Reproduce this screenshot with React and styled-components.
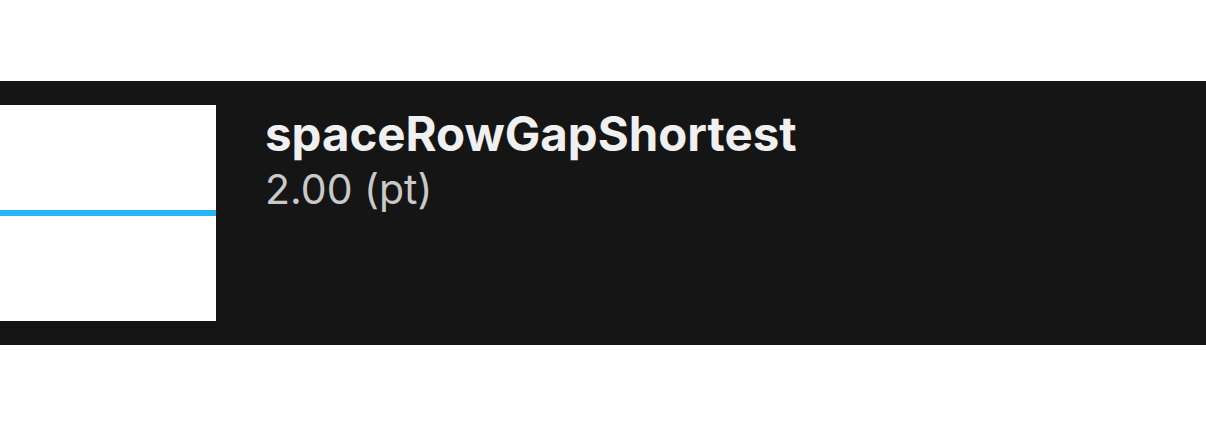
import React from "react";
import styled, { createGlobalStyle } from "styled-components";

const GlobalStyle = createGlobalStyle`
  html, body {
    margin: 0;
    padding: 0;
    background: #ffffff;
  }
  body {
    font-family: "Inter", "Roboto", sans-serif;
  }
`;

const Page = styled.div`
  width: 1206px;
  height: 426px;
  padding-top: 81px;
  box-sizing: border-box;
`;

const Band = styled.div`
  display: flex;
  align-items: flex-start;
  gap: 49px;
  height: 264px;
  padding: 24px 0;
  box-sizing: border-box;
  background: #151515;
`;

const Preview = styled.div`
  display: flex;
  flex-direction: column;
  justify-content: center;
  width: 216px;
  height: 216px;
  background: #fefefe;
  flex-shrink: 0;
`;

const Rule = styled.div`
  height: ${(p) => p.thickness}px;
  background: #29b3fc;
`;

const Info = styled.div`
  display: flex;
  flex-direction: column;
  padding-top: 3px;
`;

const Name = styled.div`
  font-size: 47.4px;
  font-weight: 700;
  line-height: 52px;
  color: #f0f0f0;
`;

const Value = styled.div`
  font-size: 41px;
  font-weight: 400;
  line-height: 58px;
  color: #c9c9c9;
`;

export default function App() {
  return (
    <>
      <GlobalStyle />
      <Page>
        <Band>
          <Preview>
            <Rule thickness={6} />
          </Preview>
          <Info>
            <Name>spaceRowGapShortest</Name>
            <Value>2.00 (pt)</Value>
          </Info>
        </Band>
      </Page>
    </>
  );
}
